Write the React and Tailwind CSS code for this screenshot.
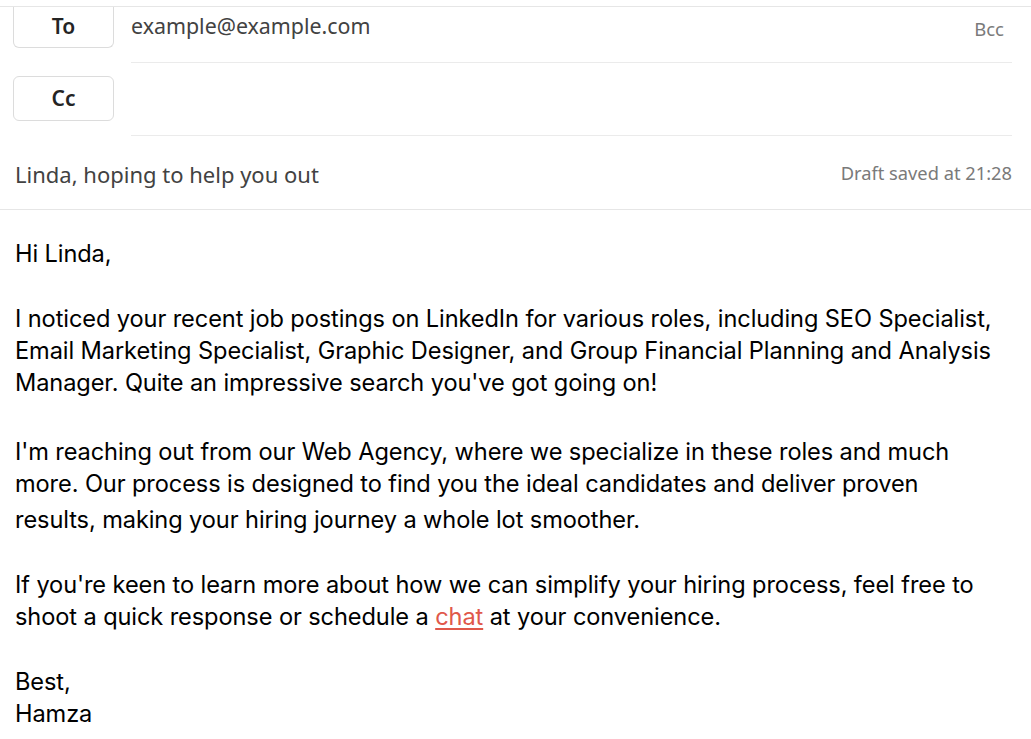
export default function App() {
  const head = { fontFamily: '"Noto Sans", "Open Sans", sans-serif' }
  const body = { fontFamily: 'Inter, "Noto Sans", sans-serif' }
  return (
    <div className="w-[1031px] h-[739px] bg-white overflow-hidden">
      <div style={head}>
        <div className="h-[6px]"></div>
        <div className="border-t border-[#e6e6e6]">
          <div className="flex items-start">
            <button className="ml-[13px] w-[101px] h-[41px] border-x border-b border-[#dcdcdc] rounded-b-md text-[21px] font-semibold text-[#242424] flex items-center justify-center">To</button>
            <div className="flex-1 ml-[17px] mr-[19px]">
              <div className="h-[56px] flex items-start justify-between border-b border-[#ebebeb]">
                <span className="text-[21.4px] text-[#424242] leading-[38px]">example@example.com</span>
                <span className="text-[18.5px] text-[#7a7a7a] leading-[44px] mr-[8px]">Bcc</span>
              </div>
            </div>
          </div>
          <div className="flex items-start">
            <button className="ml-[13px] mt-[13px] w-[101px] h-[45px] border border-[#dcdcdc] rounded-md text-[21px] font-semibold text-[#242424] flex items-center justify-center">Cc</button>
            <div className="flex-1 ml-[17px] mr-[19px] h-[73px] border-b border-[#ebebeb]"></div>
          </div>
          <div className="h-[74px] flex items-center justify-between pl-[15px] pr-[19px] border-b border-[#e6e6e6]">
            <span className="text-[22px] text-[#424242] mt-[3px]">Linda, hoping to help you out</span>
            <span className="text-[18.3px] text-[#7a7a7a] mt-[1px]">Draft saved at 21:28</span>
          </div>
        </div>
      </div>
      <div style={body} className="px-[15px] pt-[28px] text-[23.6px] leading-[32px] text-black tracking-[-0.1px] whitespace-nowrap">
        <div>Hi Linda,</div>
        <div className="mt-[33px]">I noticed your recent job postings on LinkedIn for various roles, including SEO Specialist,</div>
        <div>Email Marketing Specialist, Graphic Designer, and Group Financial Planning and Analysis</div>
        <div>Manager. Quite an impressive search you've got going on!</div>
        <div className="mt-[37px]">I'm reaching out from our Web Agency, where we specialize in these roles and much</div>
        <div>more. Our process is designed to find you the ideal candidates and deliver proven</div>
        <div className="mt-[4px]">results, making your hiring journey a whole lot smoother.</div>
        <div className="mt-[33px]">If you're keen to learn more about how we can simplify your hiring process, feel free to</div>
        <div>shoot a quick response or schedule a <a href="#" className="text-[#e0584a] underline underline-offset-[3px]">chat</a> at your convenience.</div>
        <div className="mt-[33px]">Best,</div>
        <div>Hamza</div>
      </div>
    </div>
  )
}
